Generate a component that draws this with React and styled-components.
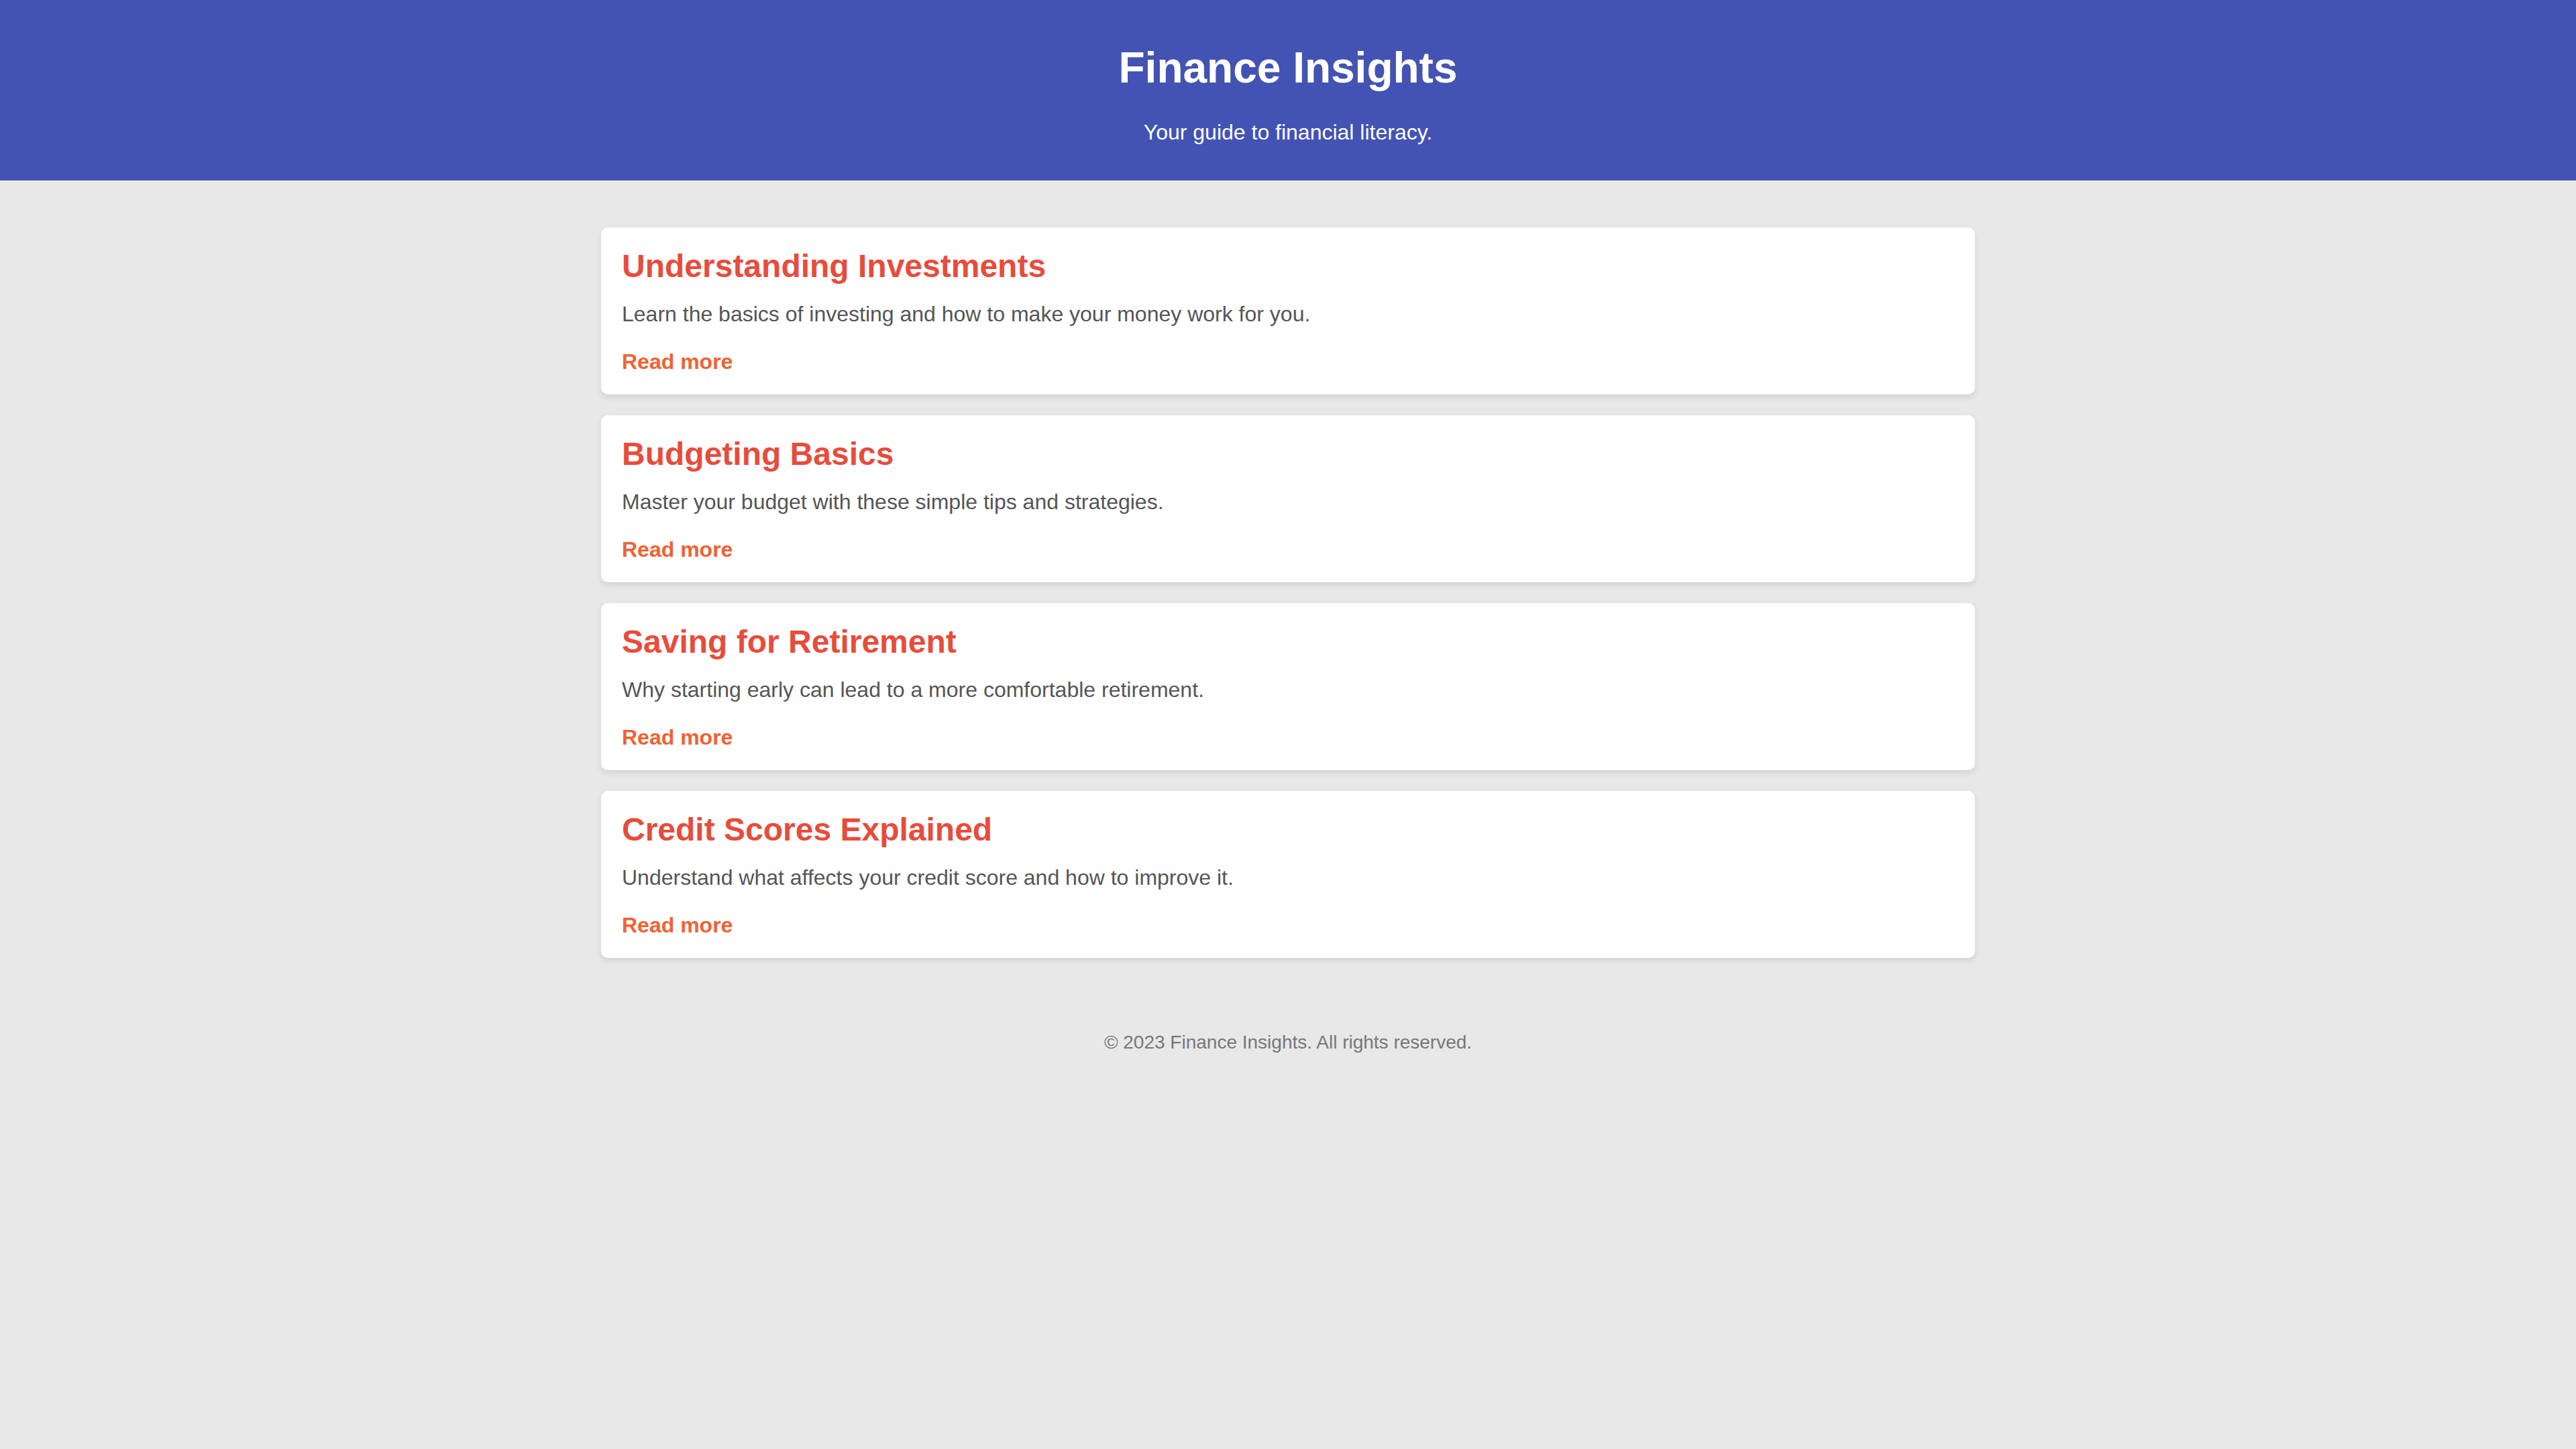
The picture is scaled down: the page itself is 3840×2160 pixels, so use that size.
import React from "react";
import styled, { createGlobalStyle } from "styled-components";

const articles = [
  {
    title: "Understanding Investments",
    summary: "Learn the basics of investing and how to make your money work for you.",
  },
  {
    title: "Budgeting Basics",
    summary: "Master your budget with these simple tips and strategies.",
  },
  {
    title: "Saving for Retirement",
    summary: "Why starting early can lead to a more comfortable retirement.",
  },
  {
    title: "Credit Scores Explained",
    summary: "Understand what affects your credit score and how to improve it.",
  },
];

const GlobalStyle = createGlobalStyle`
  html, body {
    margin: 0;
    padding: 0;
    background: #e8e8e8;
    font-family: "Liberation Sans", Arial, sans-serif;
  }
`;

const Page = styled.div`
  min-height: 2160px;
  background: #e8e8e8;
`;

const Header = styled.header`
  background: #4353b3;
  color: #fff;
  text-align: center;
  padding: 64px 0 53px;

  h1 {
    margin: 0;
    font-size: 64px;
    line-height: 74px;
    font-weight: 700;
  }

  p {
    margin: 41px 0 0;
    font-size: 32px;
    line-height: 37px;
  }
`;

const Main = styled.main`
  width: 2048px;
  margin: 70px auto 0;
  display: flex;
  flex-direction: column;
  gap: 31px;
`;

const Card = styled.article`
  background: #fff;
  border-radius: 10px;
  box-shadow: 0 4px 10px rgba(0, 0, 0, 0.1);
  padding: 30px 31px;

  h2 {
    margin: 0 0 26px;
    font-size: 48px;
    line-height: 55px;
    font-weight: 700;
    color: #e74c3c;
  }

  p {
    margin: 0 0 34px;
    font-size: 32px;
    line-height: 37px;
    color: #555;
  }
`;

const ReadMore = styled.a`
  display: block;
  width: fit-content;
  font-size: 32px;
  line-height: 37px;
  font-weight: 700;
  color: #ef6234;
  text-decoration: none;
`;

const Footer = styled.footer`
  text-align: center;
  padding-top: 110px;
  font-size: 28px;
  line-height: 32px;
  color: #777;
`;

const App = () => {
  return (
    <>
      <GlobalStyle />
      <Page>
        <Header>
          <h1>Finance Insights</h1>
          <p>Your guide to financial literacy.</p>
        </Header>
        <Main>
          {articles.map((a) => (
            <Card key={a.title}>
              <h2>{a.title}</h2>
              <p>{a.summary}</p>
              <ReadMore href="#">Read more</ReadMore>
            </Card>
          ))}
        </Main>
        <Footer>© 2023 Finance Insights. All rights reserved.</Footer>
      </Page>
    </>
  );
};

export default App;
